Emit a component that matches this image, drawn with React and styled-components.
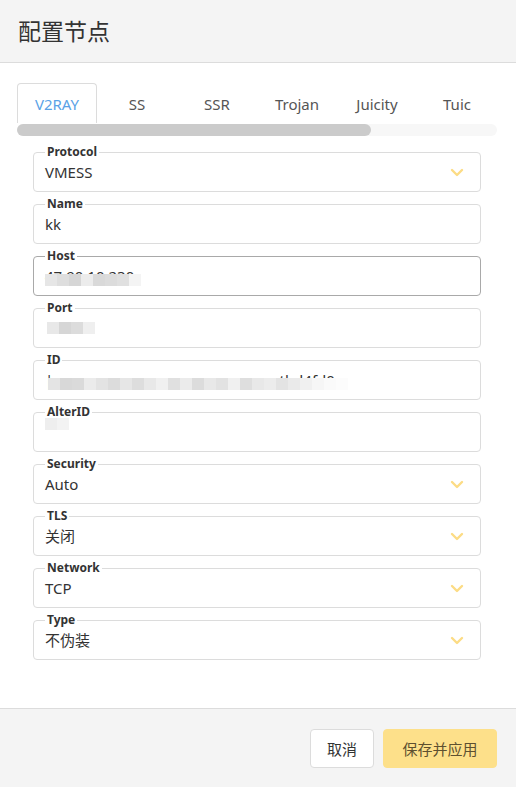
import React from "react";
import styled, { createGlobalStyle } from "styled-components";

const Global = createGlobalStyle`
  html, body { margin: 0; padding: 0; background: #fff; }
  body { font-family: "Noto Sans", "Noto Sans CJK SC", sans-serif; color: #333; }
  * { box-sizing: border-box; }
`;

const Dialog = styled.div`
  width: 516px;
  height: 787px;
  display: flex;
  flex-direction: column;
  background: #fff;
`;

const Header = styled.div`
  height: 63px;
  flex: none;
  background: #f4f4f4;
  border-bottom: 1px solid #dcdcdc;
  display: flex;
  align-items: center;
  padding: 0 0 2px 18px;
  font-size: 23px;
  font-family: "Noto Sans CJK SC", sans-serif;
  color: #333;
`;

const Body = styled.div`
  flex: 1;
  padding: 20px 19px 0 17px;
`;

const Tabs = styled.div`
  display: flex;
  height: 40px;
`;

const Tab = styled.div`
  width: 80px;
  flex: none;
  display: flex;
  align-items: center;
  justify-content: center;
  font-size: 15px;
  color: ${(p) => (p.$active ? "#5aa2e6" : "#555")};
  border: 1px solid ${(p) => (p.$active ? "#dcdcdc" : "transparent")};
  border-bottom: none;
  border-radius: 4px 4px 0 0;
  padding-top: 1px;
`;

const Track = styled.div`
  height: 12px;
  margin-top: 1px;
  border-radius: 6px;
  background: #f7f7f7;
  width: 480px;
`;

const Thumb = styled.div`
  height: 12px;
  border-radius: 6px;
  background: #cbcbcb;
`;

const Form = styled.div`
  margin: 9px 0 0 16px;
  width: 448px;
  display: flex;
  flex-direction: column;
  gap: 5px;
`;

const Field = styled.fieldset`
  margin: 0;
  padding: 3px 16px 9px 11px;
  border: 1px solid ${(p) => (p.$focus ? "#a9a9a9" : "#dcdcdc")};
  border-radius: 4px;
  min-width: 0;
`;

const Legend = styled.legend`
  padding: 0 2px;
  font-size: 12px;
  line-height: 14px;
  font-weight: 700;
  color: #333;
`;

const ValueRow = styled.div`
  height: 20px;
  display: flex;
  align-items: center;
  justify-content: space-between;
`;

const Value = styled.div`
  position: relative;
  flex: 1;
  font-size: 15px;
  line-height: 20px;
  color: #333;
  white-space: pre;
`;

const Mosaic = styled.div`
  position: absolute;
  left: ${(p) => p.$left || 0}px;
  top: ${(p) => p.$top}px;
  display: flex;
`;

const Cell = styled.div`
  width: 12px;
  height: 12px;
`;

const Chevron = () => (
  <svg width="14" height="9" viewBox="0 0 14 9">
    <path d="M2 2 L7 7 L12 2" fill="none" stroke="#fcdc85" strokeWidth="2.4" strokeLinecap="round" strokeLinejoin="round" />
  </svg>
);

const Footer = styled.div`
  height: 79px;
  flex: none;
  background: #f4f4f4;
  border-top: 1px solid #dcdcdc;
  display: flex;
  justify-content: flex-end;
  align-items: flex-start;
  gap: 9px;
  padding: 20px 19px 0 0;
`;

const Button = styled.button`
  height: 39px;
  width: ${(p) => (p.$primary ? 114 : 64)}px;
  padding: 0;
  border-radius: 4px;
  font-size: 15px;
  font-family: "Noto Sans CJK SC", sans-serif;
  border: 1px solid ${(p) => (p.$primary ? "#fde08a" : "#dcdcdc")};
  background: ${(p) => (p.$primary ? "#fde08a" : "#fff")};
  color: ${(p) => (p.$primary ? "#5e5030" : "#333")};
`;

const shades = (arr) => arr.map((c, i) => <Cell key={i} style={{ background: c }} />);

const fields = [
  { label: "Protocol", value: "VMESS", select: true },
  { label: "Name", value: "kk" },
  { label: "Host", focus: true, value: "47.90.10.230", mosaic: { top: 8, cells: ["#e6e6e6", "#dedede", "#d6d6d6", "#ececec", "#d9d9d9", "#dcdcdc", "#e0e0e0", "#f4f4f4"] } },
  { label: "Port", value: "", mosaic: { top: 4, left: 2, cells: ["#e8e8e8", "#d6d6d6", "#dcdcdc", "#efefef"] } },
  { label: "ID", value: "|                                                          tbd4fd0", mosaic: { top: 8, left: 3, cells: ["#e4e4e4", "#d8d8d8", "#dadada", "#ebebeb", "#e3e3e3", "#dcdcdc", "#e6e6e6", "#dddddd", "#e8e8e8", "#f0f0f0", "#e0e0e0", "#ebebeb", "#dcdcdc", "#e8e8e8", "#e2e2e2", "#f0f0f0", "#dedede", "#e8e8e8", "#ececec", "#e3e3e3", "#eaeaea", "#f0f0f0", "#f6f6f6", "#fafafa", "#fcfcfc"] } },
  { label: "AlterID", value: "", mosaic: { top: -4, left: 0, cells: ["#eeeeee", "#f3f3f3"] } },
  { label: "Security", value: "Auto", select: true },
  { label: "TLS", value: "关闭", select: true },
  { label: "Network", value: "TCP", select: true },
  { label: "Type", value: "不伪装", select: true },
];

const tabs = ["V2RAY", "SS", "SSR", "Trojan", "Juicity", "Tuic"];

export default function App() {
  return (
    <>
      <Global />
      <Dialog>
        <Header>配置节点</Header>
        <Body>
          <Tabs>
            {tabs.map((t, i) => (
              <Tab key={t} $active={i === 0}>{t}</Tab>
            ))}
          </Tabs>
          <Track>
            <Thumb style={{ width: "354px" }} />
          </Track>
          <Form>
            {fields.map((f) => (
              <Field key={f.label} $focus={f.focus}>
                <Legend>{f.label}</Legend>
                <ValueRow>
                  <Value>
                    {f.value || "\u00a0"}
                    {f.mosaic && (
                      <Mosaic $top={f.mosaic.top} $left={f.mosaic.left}>
                        {shades(f.mosaic.cells)}
                      </Mosaic>
                    )}
                  </Value>
                  {f.select && <Chevron />}
                </ValueRow>
              </Field>
            ))}
          </Form>
        </Body>
        <Footer>
          <Button>取消</Button>
          <Button $primary>保存并应用</Button>
        </Footer>
      </Dialog>
    </>
  );
}
